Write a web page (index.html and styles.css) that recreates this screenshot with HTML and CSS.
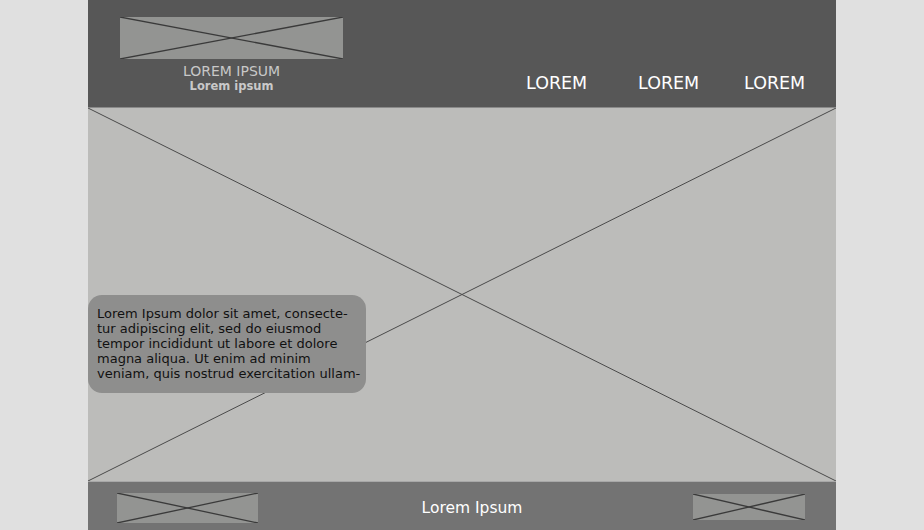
FILE: index.html
```html
<!DOCTYPE html>
<html lang="en">
<head>
    <meta charset="UTF-8">
    <meta name="viewport" content="width=device-width, initial-scale=1.0">
    <title>Wireframe</title>
    <link rel="stylesheet" href="styles.css">
</head>
<body>
    <div class="page">
        <header class="site-header">
            <div class="brand">
                <svg class="placeholder logo-box" viewBox="0 0 100 100" preserveAspectRatio="none">
                    <rect width="100" height="100"/>
                    <line x1="0" y1="0" x2="100" y2="100"/>
                    <line x1="0" y1="100" x2="100" y2="0"/>
                </svg>
                <div class="brand-title">LOREM IPSUM</div>
                <div class="brand-sub">Lorem ipsum</div>
            </div>
            <nav class="nav">
                <a class="nav-link first">LOREM</a>
                <a class="nav-link second">LOREM</a>
                <a class="nav-link third">LOREM</a>
            </nav>
        </header>

        <section class="hero">
            <svg class="hero-cross" viewBox="0 0 100 100" preserveAspectRatio="none">
                <line x1="0" y1="0" x2="100" y2="100"/>
                <line x1="0" y1="100" x2="100" y2="0"/>
            </svg>
            <div class="hero-text">
                Lorem Ipsum dolor sit amet, consecte-<br>
                tur adipiscing elit, sed do eiusmod<br>
                tempor incididunt ut labore et dolore<br>
                magna aliqua. Ut enim ad minim<br>
                veniam, quis nostrud exercitation ullam-
            </div>
        </section>

        <footer class="site-footer">
            <svg class="placeholder foot-left" viewBox="0 0 100 100" preserveAspectRatio="none">
                <rect width="100" height="100"/>
                <line x1="0" y1="0" x2="100" y2="100"/>
                <line x1="0" y1="100" x2="100" y2="0"/>
            </svg>
            <div class="footer-text">Lorem Ipsum</div>
            <svg class="placeholder foot-right" viewBox="0 0 100 100" preserveAspectRatio="none">
                <rect width="100" height="100"/>
                <line x1="0" y1="0" x2="100" y2="100"/>
                <line x1="0" y1="100" x2="100" y2="0"/>
            </svg>
        </footer>
    </div>
</body>
</html>
```

FILE: styles.css
```css
body {
    margin: 0;
    padding: 0;
    background-color: #e0e0e0;
    font-family: "DejaVu Sans", Arial, sans-serif;
}

.page {
    width: 748px;
    height: 530px;
    margin: 0 auto;
    display: flex;
    flex-direction: column;
}

/* placeholder boxes with a cross */
.placeholder {
    display: block;
}

.placeholder rect {
    fill: #939492;
}

.placeholder line {
    stroke: #3a3a3a;
    stroke-width: 1.3;
    vector-effect: non-scaling-stroke;
}

/* header */
.site-header {
    height: 107px;
    background-color: #575757;
    border-bottom: 1px solid #8a8a8a;
    display: flex;
    justify-content: space-between;
    align-items: flex-end;
}

.brand {
    margin-left: 32px;
    padding-top: 17px;
    align-self: flex-start;
    width: 223px;
    text-align: center;
}

.logo-box {
    width: 223px;
    height: 42px;
}

.brand-title {
    margin-top: 5px;
    font-size: 14px;
    line-height: 15px;
    color: #c8c8c8;
}

.brand-sub {
    font-size: 11.5px;
    line-height: 14px;
    font-weight: bold;
    color: #c9c9c9;
}

.nav {
    display: flex;
    padding-right: 31px;
    padding-bottom: 14px;
}

.nav-link {
    color: #ffffff;
    font-size: 17.5px;
    line-height: 20px;
    width: 61px;
    text-align: center;
    white-space: nowrap;
}

.nav-link.second {
    margin-left: 51px;
}

.nav-link.third {
    margin-left: 45px;
}

/* hero */
.hero {
    position: relative;
    height: 373px;
    background-color: #bcbcba;
    border-bottom: 1px solid #a8a8a8;
}

.hero-cross {
    display: block;
    width: 100%;
    height: 100%;
}

.hero-cross line {
    stroke: #4a4a4a;
    stroke-width: 1;
    vector-effect: non-scaling-stroke;
}

.hero-text {
    position: absolute;
    left: 0;
    top: 187px;
    width: 278px;
    height: 98px;
    box-sizing: border-box;
    padding: 11px 0 0 9px;
    background-color: #8e8e8d;
    border-radius: 14px;
    color: #111111;
    font-size: 13px;
    line-height: 15px;
    white-space: nowrap;
}

/* footer */
.site-footer {
    flex: 1;
    background-color: #737373;
    display: flex;
    align-items: center;
    padding-left: 29px;
    padding-right: 31px;
}

.foot-left {
    width: 141px;
    height: 30px;
    margin-top: 4px;
}

.footer-text {
    flex: 1;
    text-align: center;
    padding-right: 7px;
    margin-top: 3px;
    color: #ffffff;
    font-size: 15.5px;
}

.foot-right {
    width: 112px;
    height: 26px;
    margin-top: 2px;
}
```
